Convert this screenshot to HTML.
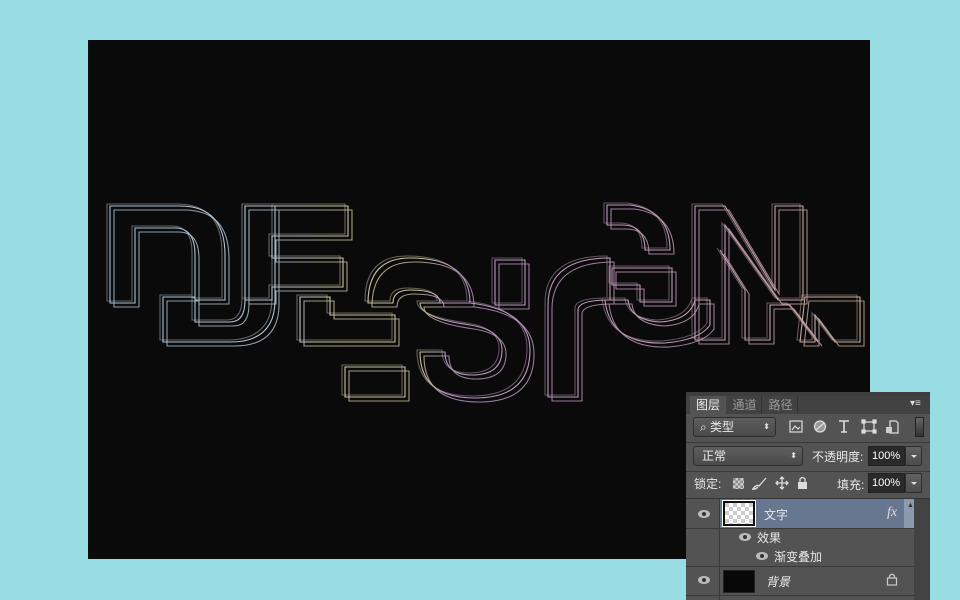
<!DOCTYPE html>
<html><head><meta charset="utf-8"><style>
*{margin:0;padding:0;box-sizing:border-box}
body{width:960px;height:600px;background:#97dde3;position:relative;overflow:hidden;font-family:"Liberation Sans","Noto Sans CJK SC",sans-serif;}
#cv{position:absolute;left:88px;top:40px;width:782px;height:519px;background:#0a0a0a}
svg.art{position:absolute;left:0;top:0}
.p{position:absolute;left:686px;top:392px;width:244px;height:208px;background:#535353;color:#e8e8e8;font-size:12px}
.a{position:absolute}
.box{position:absolute;border:1px solid #2e2e2e;border-radius:3px;background:linear-gradient(#5e5e5e,#4a4a4a)}
.inp{position:absolute;background:#2a2a2a;border:1px solid #222;color:#fff;font-size:11px;line-height:18px;padding-left:3px}
.dd{position:absolute;width:17px;height:20px;border:1px solid #2e2e2e;border-radius:2px;background:linear-gradient(#616161,#4c4c4c)}
.dd:after{content:"";position:absolute;left:5px;top:8px;border:3px solid transparent;border-top:3px solid #ddd}
.hl{position:absolute;left:0;width:228px;height:1px;background:#3a3a3a}
.eye{position:absolute;width:12px;height:8px;border-radius:50%;background:#bbb}
.eye:after{content:"";position:absolute;left:4px;top:2px;width:4px;height:4px;border-radius:50%;background:#333}
</style></head><body>
<div id="cv"></div>
<svg class="art" width="960" height="600">
<defs><linearGradient id="g" gradientUnits="userSpaceOnUse" x1="100" y1="0" x2="860" y2="0">
<stop offset="0" stop-color="#a9c2d2"/><stop offset="0.25" stop-color="#b8c3cc"/><stop offset="0.3" stop-color="#c8c6a0"/><stop offset="0.42" stop-color="#c8c09a"/><stop offset="0.46" stop-color="#b697bf"/><stop offset="0.8" stop-color="#c09ab4"/><stop offset="1" stop-color="#c8ae98"/></linearGradient>
<g id="s" fill="none" stroke="url(#g)" stroke-width="1.1">
<path d="M110,206 H180 Q225,206 225,255 V300 H195 V255 Q195,228 175,228 H135 V303 H110 Z"/>
<path d="M163,297 H195 V322 H230 Q245,322 245,300 V206 H275 V300 Q275,342 230,342 H163 Z"/>
<path d="M245,206 H348 V236 H272 V258 H343 V287 H272 V300 H245 Z"/>
<path d="M300,297 H330 V315 H395 V342 H300 Z"/>
<path d="M345,367 H405 V397 H345 Z"/>
<path d="M368,303 Q368,258 410,258 Q470,258 470,303 H440 Q440,290 410,290 Q393,290 393,303 Z"/>
<path d="M420,303 H470 Q530,310 530,350 Q530,398 475,398 Q420,398 420,352 H445 Q445,375 472,375 Q502,375 502,350 Q502,330 470,325 Q420,318 420,303Z"/>
<path d="M495,260 H525 V305 H495 Z"/>
<path d="M548,305 Q548,258 610,258 V300 Q578,300 578,310 V397 H548 Z"/>
<path d="M607,205 H630 Q670,210 670,250 H645 Q645,225 622,225 H607 Z"/>
<path d="M612,268 H672 V302 H640 V285 H612 Z"/>
<path d="M605,300 Q610,345 665,343 Q700,340 710,325 V300 H695 Q690,320 660,322 Q630,320 628,300 Z"/>
<path d="M695,206 H725 L775,290 V206 H803 V300 H778 L725,225 V340 H695 Z"/>
<path d="M805,297 H860 V342 H835 L815,315 V342 H800 Z"/>
<path d="M720,250 L745,290 V340 H770 V305 H790 L818,342"/>
</g></defs>
<use href="#s"/><use href="#s" transform="translate(4,4)" opacity="0.8"/><use href="#s" transform="translate(-3,-2)" opacity="0.5"/>
</svg>
<div class="p">
<div class="a" style="left:0;top:0;width:244px;height:4px;background:#3e3e3e"></div>
<div class="a" style="left:0;top:4px;width:244px;height:18px;background:#424242"></div>
<div class="a" style="left:4px;top:4px;width:36px;height:18px;background:#535353;line-height:18px;text-align:center;color:#eee">图层</div>
<div class="a" style="left:42px;top:4px;width:34px;height:18px;line-height:18px;text-align:center;color:#999;border-right:1px solid #333">通道</div>
<div class="a" style="left:78px;top:4px;width:34px;height:18px;line-height:18px;text-align:center;color:#999;border-right:1px solid #333">路径</div>
<div class="a" style="left:224px;top:6px;color:#ddd;font-size:10px">▾≡</div>
<div class="box" style="left:7px;top:25px;width:83px;height:20px;line-height:18px;padding-left:6px">⌕ 类型<span style="position:absolute;right:5px;font-size:8px">⬍</span></div>
<svg class="a" style="left:100px;top:26px" width="130" height="18" fill="none" stroke="#ddd" stroke-width="1.2">
<rect x="4" y="3" width="12" height="11"/><path d="M6,12 L9,8 L12,11 L14,9" />
<circle cx="34" cy="8.5" r="5.5" fill="#999"/><path d="M30,12 L38,5" stroke="#ddd"/>
<path d="M53,3 H63 M58,3 V14 M55,14 H61" stroke-width="1.6"/>
<rect x="78" y="4" width="10" height="9"/><rect x="76" y="2" width="3" height="3" fill="#ddd"/><rect x="87" y="2" width="3" height="3" fill="#ddd"/><rect x="76" y="12" width="3" height="3" fill="#ddd"/><rect x="87" y="12" width="3" height="3" fill="#ddd"/>
<path d="M104,3 H110 L112,5 V15 H104 Z"/><rect x="100" y="9" width="6" height="6" fill="#ccc" stroke="none"/>
</svg>
<div class="a" style="left:229px;top:25px;width:9px;height:20px;background:linear-gradient(#666,#333);border:1px solid #222"></div>
<div class="hl" style="top:50px;width:244px"></div>
<div class="box" style="left:7px;top:54px;width:110px;height:20px;line-height:18px;padding-left:8px">正常<span style="position:absolute;right:5px;font-size:8px">⬍</span></div>
<div class="a" style="left:126px;top:56px">不透明度:</div>
<div class="inp" style="left:182px;top:54px;width:37px;height:20px">100%</div>
<div class="dd" style="left:219px;top:54px"></div>
<div class="hl" style="top:79px;width:244px"></div>
<div class="a" style="left:8px;top:83px">锁定:</div>
<div class="a" style="left:47px;top:86px;width:11px;height:11px;background:repeating-conic-gradient(#ccc 0 25%,#888 0 50%) 0 0/5px 5px"></div>
<svg class="a" style="left:64px;top:82px" width="60" height="18" fill="none" stroke="#ddd" stroke-width="1.3">
<path d="M3,15 Q6,10 9,12 L16,4"/><path d="M2,15 Q5,16 8,13" fill="#ddd"/>
<path d="M32,3 V15 M26,9 H38 M30,5 L32,3 L34,5 M30,13 L32,15 L34,13 M28,7 L26,9 L28,11 M36,7 L38,9 L36,11"/>
<rect x="48" y="8" width="9" height="7" fill="#ddd" stroke="none"/><path d="M50,8 V5 Q52.5,2 55,5 V8"/>
</svg>
<div class="a" style="left:151px;top:84px">填充:</div>
<div class="inp" style="left:182px;top:81px;width:37px;height:20px">100%</div>
<div class="dd" style="left:219px;top:81px"></div>
<div class="hl" style="top:106px;width:244px;background:#333"></div>
<div class="a" style="left:228px;top:107px;width:16px;height:101px;background:#434343"></div>
<div class="a" style="left:33px;top:107px;width:1px;height:101px;background:#3a3a3a"></div>
<div class="a" style="left:34px;top:107px;width:194px;height:29px;background:#66778f"></div>
<div class="a" style="left:218px;top:107px;width:10px;height:29px;background:#8c9aad"></div>
<div class="a" style="left:221px;top:110px;font-size:7px;color:#333">▲</div>
<div class="a" style="left:37px;top:109px;width:32px;height:25px;border:2px solid #111;outline:1px solid #fff;background:repeating-conic-gradient(#fff 0 25%,#ccc 0 50%) 0 0/8px 8px"></div>
<div class="a" style="left:78px;top:114px">文字</div>
<div class="a" style="left:201px;top:113px;font-style:italic;font-family:'Liberation Serif';color:#ddd;font-size:14px">fx</div>
<div class="eye" style="left:12px;top:118px"></div>
<div class="hl" style="top:136px"></div>
<div class="eye" style="left:53px;top:141px"></div>
<div class="a" style="left:71px;top:137px">效果</div>
<div class="eye" style="left:70px;top:160px"></div>
<div class="a" style="left:88px;top:156px">渐变叠加</div>
<div class="hl" style="top:174px"></div>
<div class="eye" style="left:12px;top:184px"></div>
<div class="a" style="left:37px;top:178px;width:32px;height:23px;background:#080808;border:1px solid #222"></div>
<div class="a" style="left:80px;top:181px;font-style:italic">背景</div>
<svg class="a" style="left:200px;top:180px" width="12" height="14" fill="none" stroke="#ccc" stroke-width="1.2"><rect x="1.5" y="6" width="9" height="7"/><path d="M3.5,6 V4 Q6,0.5 8.5,4 V6"/></svg>
<div class="hl" style="top:203px"></div>
</div>
</body></html>
